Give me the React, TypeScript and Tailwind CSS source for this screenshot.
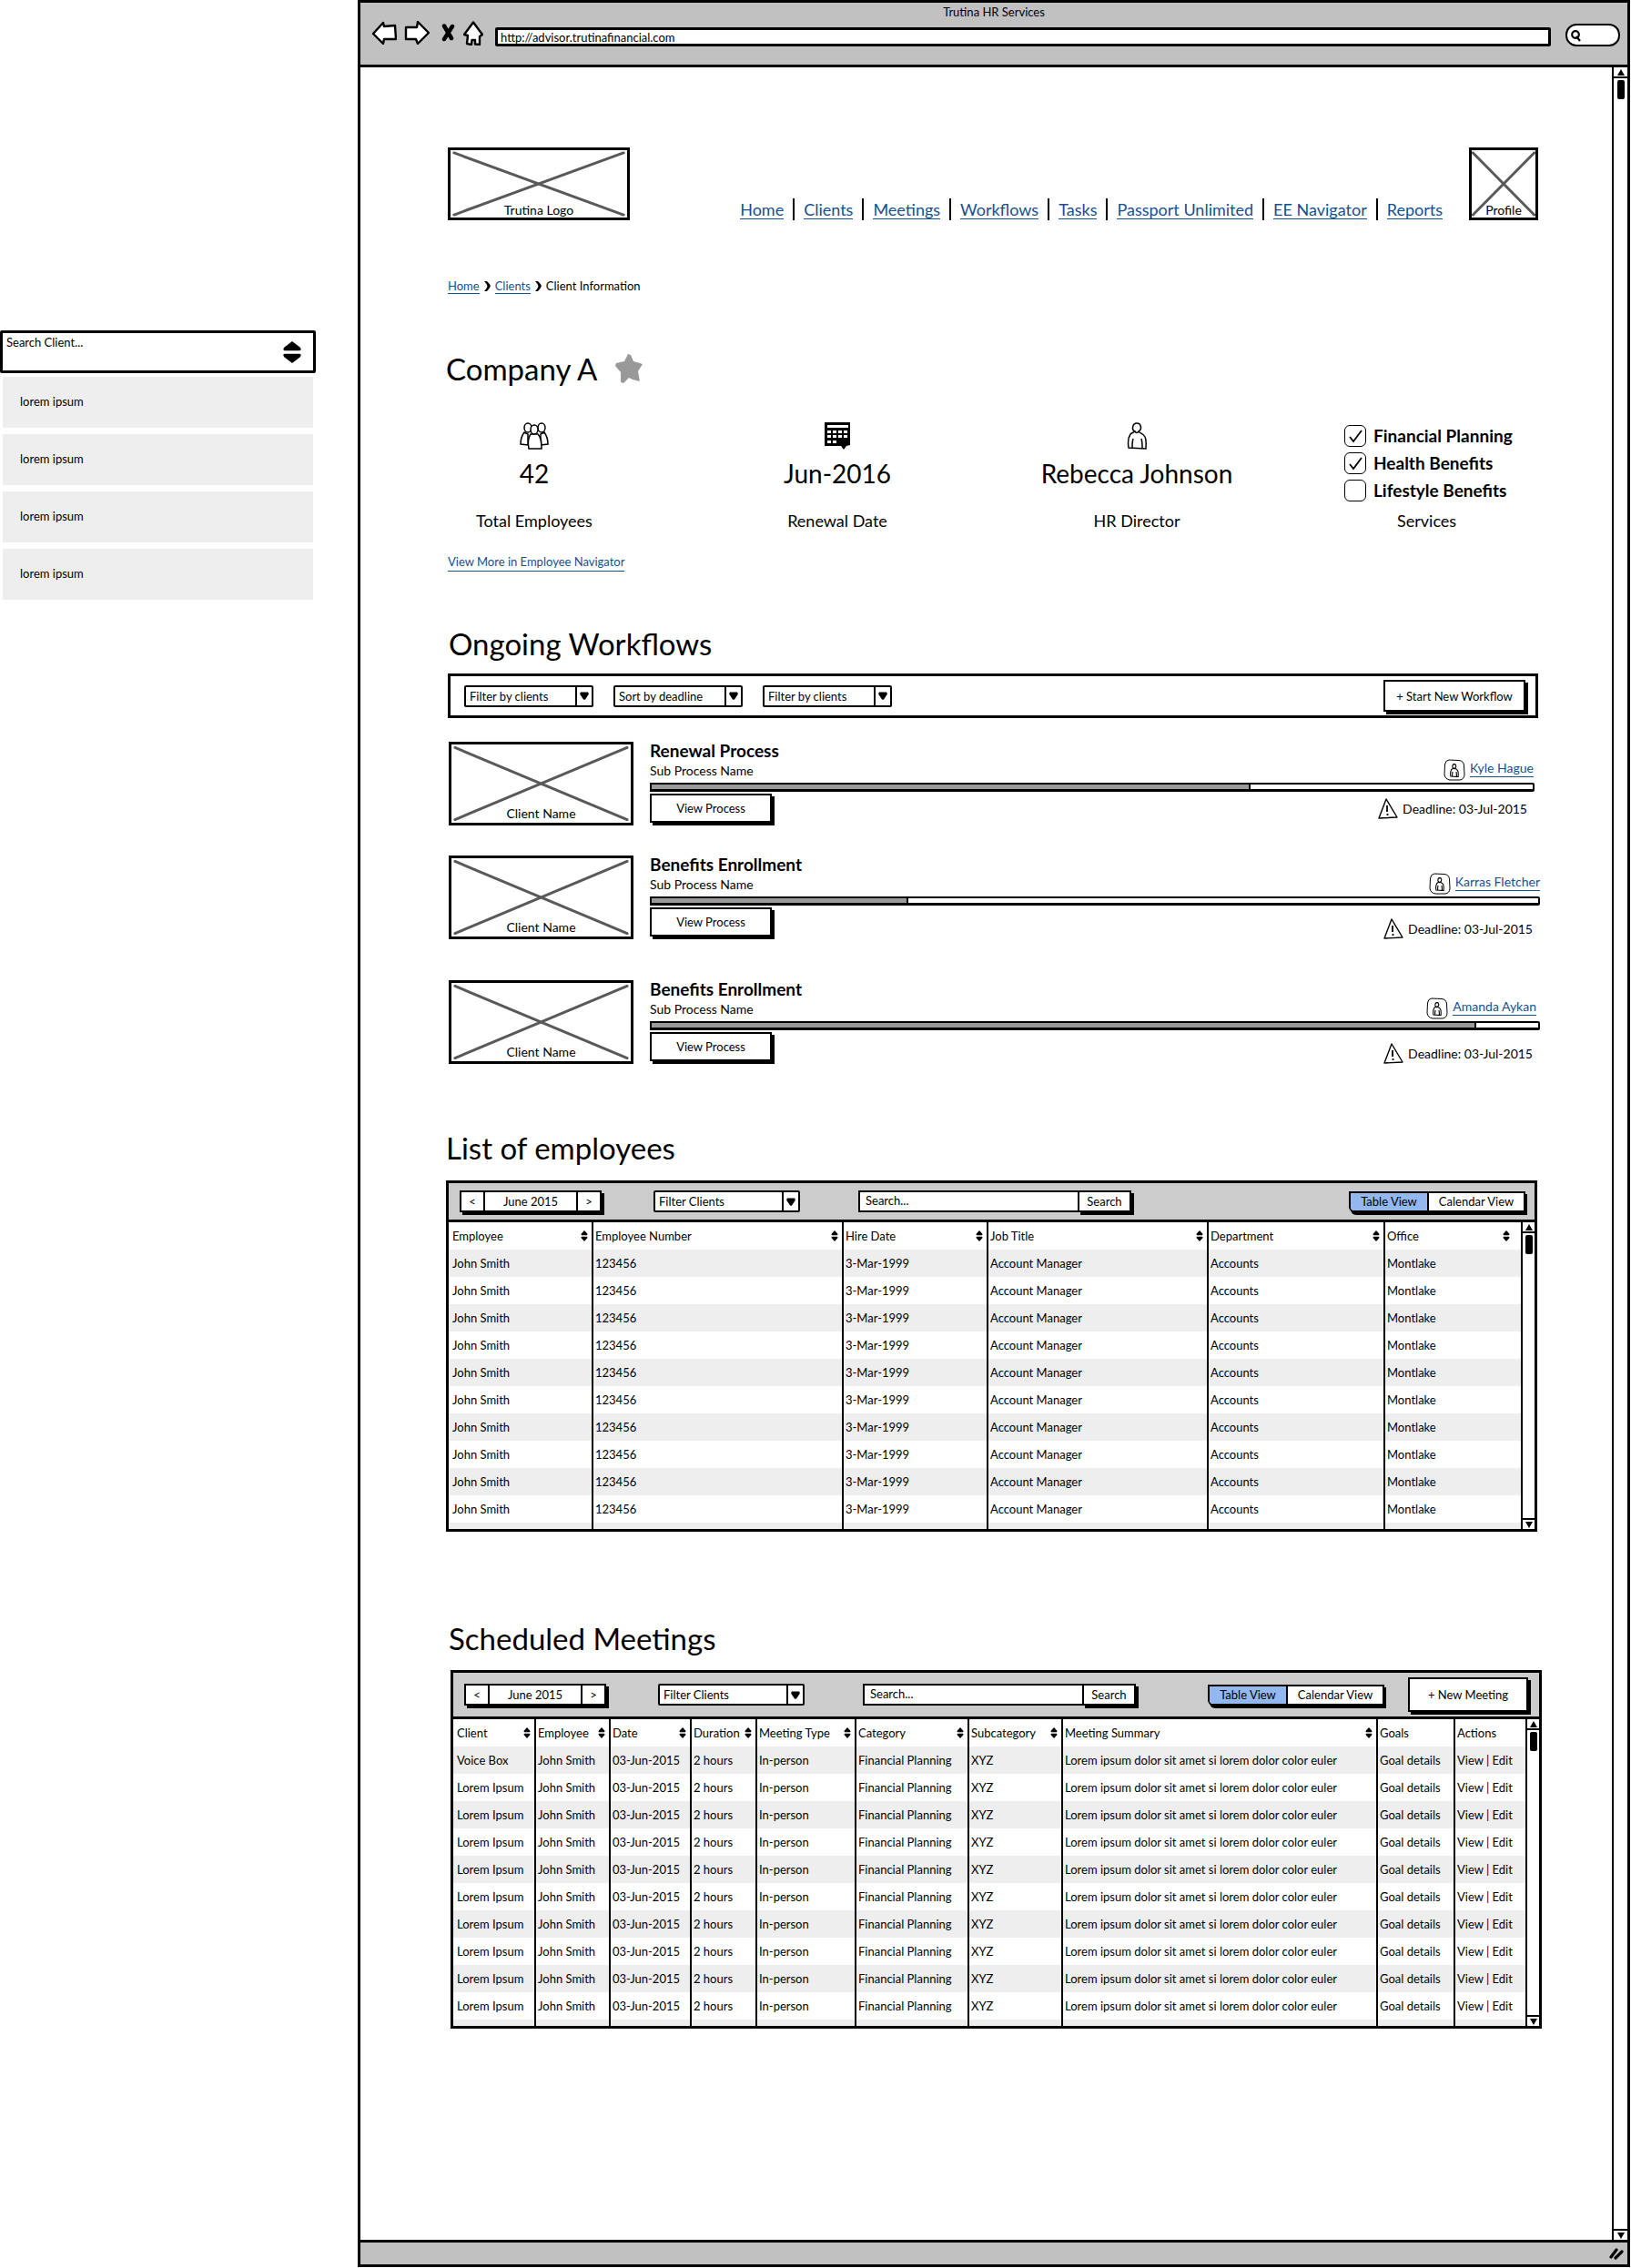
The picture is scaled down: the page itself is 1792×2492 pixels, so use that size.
import React from "react";

const linkClass = "text-[#16508f] border-b border-[#16508f]";

function SortIcon({ className = "h-3 w-2" }: { className?: string }) {
  return (
    <svg viewBox="0 0 10 14" preserveAspectRatio="none" className={className} aria-hidden="true">
      <path d="M5 0 L9 4 Q10 6 8.500 6 H1.500 Q0 6 1 4 Z M1.500 8 H8.500 Q10 8 9 10 L5 14 L1 10 Q0 8 1.500 8 Z" />
    </svg>
  );
}

function PersonShape({ weight = 1.5 }: { weight?: number }) {
  return (
    <path
      d="M9 10 C5 9 6 1 11 1 C16 1 17 8 13 10 C14 12 18 12 20 16 C22 20 21 24 21 29 L2 28 C1 22 2 16 4 13 C6 11 8 11 9 10 Z M7 18 C6 21 6 25 6 28 M16 18 C17 21 17 25 17 28 M9 10 C10 12 12 12 13 10"
      fill="none"
      stroke="black"
      strokeWidth={weight}
    />
  );
}

function PersonBadge() {
  return (
    <svg viewBox="0 0 24 24" className="size-6 shrink-0" aria-hidden="true">
      <path d="M6 1 L17 1.500 Q22 2 22.500 7 L23 17 Q23 22 18 23 L7 23 Q1.500 22 1 17 L1.500 6 Q2 1.500 6 1 Z" fill="none" stroke="black" />
      <svg x="7" y="5" width="10" height="15" viewBox="0 0 23 30" preserveAspectRatio="none">
        <PersonShape weight={2.5} />
      </svg>
    </svg>
  );
}

function PeopleIcon() {
  return (
    <svg viewBox="0 0 32 30" className="h-[30px] w-8" fill="white" stroke="black" strokeWidth="1.500" aria-hidden="true">
      <path d="M5 11 C2 15 1 19 1 24 L9 25 V13 Z M27 11 C30 15 31 19 31 24 L23 25 V13 Z" />
      <ellipse cx="9" cy="6" rx="4" ry="5" />
      <ellipse cx="24" cy="6" rx="4" ry="5" />
      <path d="M12 13 C9 17 9 23 10 29 L24 29 C24 23 24 17 20 13 Z" />
      <ellipse cx="16" cy="8" rx="4" ry="5" />
    </svg>
  );
}

function CalendarIcon() {
  const cells = [3, 9, 15, 21];
  return (
    <svg viewBox="0 0 28 30" className="h-[30px] w-7" aria-hidden="true">
      <path d="M0 0 H28 V25 L24 26 L21 30 L18 26 L0 26 Z" />
      <path d="M3 3 H26 V6 H3 Z" fill="white" />
      {[9, 14, 20].map((y, r) =>
        cells.map((x, c) => (r === 2 && c > 1 ? null : <rect key={x + "-" + y} x={x} y={y} width="4" height="3" fill="white" />)),
      )}
    </svg>
  );
}

function WarningIcon() {
  return (
    <svg viewBox="0 0 22 23" className="h-[23px] w-[22px] shrink-0" fill="none" stroke="black" aria-hidden="true">
      <path d="M9 1 L21 21 L1 22 Z" strokeWidth="1.400" strokeLinejoin="round" />
      <path d="M10 8 V15 M10.500 17 V19" strokeWidth="1.800" />
    </svg>
  );
}

function Placeholder({ label, className }: { label: string; className: string }) {
  return (
    <div className={"relative flex shrink-0 items-end justify-center border-[3px] border-black bg-white text-sm leading-4 " + className}>
      <svg viewBox="0 0 100 100" preserveAspectRatio="none" className="absolute inset-0 size-full" aria-hidden="true">
        <path d="M2 4 L98 96 M98 4 L2 96" stroke="#595959" strokeWidth="3" strokeLinecap="round" vectorEffect="non-scaling-stroke" />
      </svg>
      <span className="relative">{label}</span>
    </div>
  );
}

function Dropdown({ label, width }: { label: string; width: string }) {
  return (
    <div className={"relative h-6 shrink-0 rounded-xs border-2 border-black bg-white " + width}>
      <select aria-label={label} className="block h-full w-full appearance-none bg-transparent pl-1 text-[13px] leading-5">
        <option>{label}</option>
      </select>
      <span className="pointer-events-none absolute inset-y-0 right-0 flex w-[18px] items-center justify-center border-l-2 border-black">
        <svg viewBox="0 0 10 9" className="h-[9px] w-2.5" aria-hidden="true">
          <path d="M1 0.500 H9 Q10.500 2 9 4 L6 8.500 Q5 9 4 8.500 L1 4 Q-0.500 2 1 0.500 Z" />
        </svg>
      </span>
    </div>
  );
}

function ShadowButton({ children, className }: { children: React.ReactNode; className: string }) {
  return (
    <button type="button" className={"shrink-0 border-2 border-black bg-white text-[13px] leading-4 shadow-[3px_3px_0_#000] " + className}>
      {children}
    </button>
  );
}

function Scrollbar({ className = "w-[15px]" }: { className?: string }) {
  return (
    <div className={"flex shrink-0 flex-col items-center border-l-2 border-black bg-white " + className} aria-hidden="true">
      <span className="flex h-3 w-full shrink-0 items-center justify-center border-b-2 border-black">
        <svg viewBox="0 0 8 7" className="h-[7px] w-2">
          <path d="M4 0 L8 7 H0 Z" />
        </svg>
      </span>
      <span className="mt-0.5 h-[21px] w-2 shrink-0 rounded-xs bg-black" />
      <span className="mt-auto flex h-3 w-full shrink-0 items-center justify-center border-t-2 border-black">
        <svg viewBox="0 0 8 7" className="h-[7px] w-2">
          <path d="M0 0 H8 L4 7 Z" />
        </svg>
      </span>
    </div>
  );
}

function MonthPicker() {
  return (
    <div className="flex h-6 w-[156px] shrink-0 border-2 border-black bg-white text-[13px] leading-4 shadow-[3px_3px_0_#000]">
      <button type="button" className="w-[26px] border-r-2 border-black" aria-label="Previous month">
        &lt;
      </button>
      <button type="button" className="flex-1">
        June 2015
      </button>
      <button type="button" className="w-[26px] border-l-2 border-black" aria-label="Next month">
        &gt;
      </button>
    </div>
  );
}

function SearchBox() {
  return (
    <form className="flex h-6 w-[300px] shrink-0" role="search">
      <input
        type="search"
        aria-label="Search"
        placeholder="Search..."
        className="min-w-0 flex-1 border-2 border-r-0 border-black bg-white pl-1.5 text-[13px] placeholder:text-black"
      />
      <ShadowButton className="w-[59px]">Search</ShadowButton>
    </form>
  );
}

function ViewToggle() {
  return (
    <div className="flex h-[23px] w-[194px] shrink-0 rounded-bl-md border-2 border-black bg-white text-[13px] leading-4 shadow-[2px_3px_0_#000]">
      <button type="button" aria-pressed="true" className="w-[86px] rounded-bl-sm border-r-2 border-black bg-[#93b8f0]">
        Table View
      </button>
      <button type="button" aria-pressed="false" className="flex-1">
        Calendar View
      </button>
    </div>
  );
}

type Column = { name: string; width: string; sortable: boolean };

function DataTable({ columns, rows, label }: { columns: Column[]; rows: string[][]; label: string }) {
  return (
    <div className="flex">
      <table aria-label={label} className="min-w-0 flex-1 table-fixed border-collapse text-[13px] leading-4">
        <colgroup>
          {columns.map((c) => (
            <col key={c.name} className={c.width} />
          ))}
        </colgroup>
        <thead>
          <tr className="h-[30px]">
            {columns.map((c) => (
              <th
                key={c.name}
                scope="col"
                className="border-r-2 border-black pr-1 pl-0.5 text-left font-normal whitespace-nowrap first:pl-1 last:border-r-0 last:pr-3"
              >
                {c.sortable ? (
                  <button type="button" className="flex w-full items-center justify-between">
                    {c.name}
                    <SortIcon />
                  </button>
                ) : (
                  c.name
                )}
              </th>
            ))}
          </tr>
        </thead>
        <tbody>
          {rows.map((row, i) => (
            <tr key={i} className="h-[30px] odd:bg-[#eeeeee]">
              {row.map((cell, j) => (
                <td key={j} className="border-r-2 border-black pl-0.5 whitespace-nowrap first:pl-1 last:border-r-0">
                  {cell}
                </td>
              ))}
            </tr>
          ))}
          <tr className="h-[7px] bg-[#eeeeee]">
            {columns.map((c) => (
              <td key={c.name} className="border-r-2 border-black last:border-r-0" />
            ))}
          </tr>
        </tbody>
      </table>
      <Scrollbar />
    </div>
  );
}

const employeeColumns: Column[] = [
  { name: "Employee", width: "w-[158px]", sortable: true },
  { name: "Employee Number", width: "w-[275px]", sortable: true },
  { name: "Hire Date", width: "w-[159px]", sortable: true },
  { name: "Job Title", width: "w-auto", sortable: true },
  { name: "Department", width: "w-[194px]", sortable: true },
  { name: "Office", width: "w-[150px]", sortable: true },
];

const employeeRows = Array.from({ length: 10 }, () => ["John Smith", "123456", "3-Mar-1999", "Account Manager", "Accounts", "Montlake"]);

const meetingColumns: Column[] = [
  { name: "Client", width: "w-[90px]", sortable: true },
  { name: "Employee", width: "w-[82px]", sortable: true },
  { name: "Date", width: "w-[89px]", sortable: true },
  { name: "Duration", width: "w-[72px]", sortable: true },
  { name: "Meeting Type", width: "w-[109px]", sortable: true },
  { name: "Category", width: "w-[124px]", sortable: true },
  { name: "Subcategory", width: "w-[103px]", sortable: true },
  { name: "Meeting Summary", width: "w-auto", sortable: true },
  { name: "Goals", width: "w-[85px]", sortable: false },
  { name: "Actions", width: "w-[78px]", sortable: false },
];

const meetingRows = Array.from({ length: 10 }, (_, i) => [
  i === 0 ? "Voice Box" : "Lorem Ipsum",
  "John Smith",
  "03-Jun-2015",
  "2 hours",
  "In-person",
  "Financial Planning",
  "XYZ",
  "Lorem ipsum dolor sit amet si lorem dolor color euler",
  "Goal details",
  "View | Edit",
]);

type Workflow = { title: string; owner: string; progress: number; spacing: string; ownerPad: string; deadlinePad: string };

const workflows: Workflow[] = [
  { title: "Renewal Process", owner: "Kyle Hague", progress: 68, spacing: "mt-[26px] mr-2", ownerPad: "pr-px", deadlinePad: "pt-[5px]" },
  { title: "Benefits Enrollment", owner: "Karras Fletcher", progress: 29, spacing: "mt-[33px] mr-0.5", ownerPad: "pr-0", deadlinePad: "pt-3" },
  { title: "Benefits Enrollment", owner: "Amanda Aykan", progress: 93, spacing: "mt-[45px] mr-0.5", ownerPad: "pr-1", deadlinePad: "pt-3" },
];

function WorkflowRow({ title, owner, progress, spacing, ownerPad, deadlinePad }: Workflow) {
  return (
    <article className={"ml-[3px] flex h-[92px] gap-[18px] " + spacing}>
      <Placeholder label="Client Name" className="w-[203px] pb-0.5" />
      <div className="min-w-0 flex-1">
        <div className="flex h-[45px] justify-between">
          <div>
            <h3 className="text-[19px] leading-5 font-bold">{title}</h3>
            <p className="text-sm leading-6">Sub Process Name</p>
          </div>
          <div className={"flex items-end gap-[5px] pb-0.5 " + ownerPad}>
            <PersonBadge />
            <a href="#" className={"mb-1 text-sm leading-[18px] " + linkClass}>
              {owner}
            </a>
          </div>
        </div>
        <div role="progressbar" aria-label={title} aria-valuenow={progress} className="h-[10px] rounded-r-xs border-2 border-b-3 border-black bg-white">
          <div className="h-full border-r-2 border-black bg-[#999999]" style={{ width: progress + "%" }} />
        </div>
        <div className="flex items-start justify-between pt-0.5 pr-2">
          <ShadowButton className="h-8 w-[134px]">View Process</ShadowButton>
          <div className={"flex items-center gap-[5px] text-sm leading-4 " + deadlinePad}>
            <WarningIcon />
            Deadline: 03-Jul-2015
          </div>
        </div>
      </div>
    </article>
  );
}

function Stat({ icon, value, label, className = "" }: { icon: React.ReactNode; value: string; label: string; className?: string }) {
  return (
    <div className={"flex flex-col items-center " + className}>
      {icon}
      <div className="mt-1.5 text-[28px] leading-10">{value}</div>
      <div className="mt-5 text-lg leading-6">{label}</div>
    </div>
  );
}

function ServiceCheck({ id, label, checked = false }: { id: string; label: string; checked?: boolean }) {
  return (
    <div className="flex h-[30px] items-center gap-2">
      <span className="relative size-6">
        <input id={id} type="checkbox" defaultChecked={checked} className="peer block size-6 appearance-none rounded-md border border-black" />
        <svg viewBox="0 0 24 24" className="pointer-events-none absolute inset-0 hidden size-6 peer-checked:block" aria-hidden="true">
          <path d="M6 13 L10 18 L19 6" fill="none" stroke="black" strokeWidth="1.800" />
        </svg>
      </span>
      <label htmlFor={id} className="text-[19px] leading-6 font-bold whitespace-nowrap">
        {label}
      </label>
    </div>
  );
}

const navItems = ["Home", "Clients", "Meetings", "Workflows", "Tasks", "Passport Unlimited", "EE Navigator", "Reports"];

function Chevron() {
  return (
    <svg viewBox="0 0 7 11" className="h-[11px] w-[7px]" aria-hidden="true">
      <path d="M0 0 L3 0 Q6 3 7 5 Q6 8 3 11 L0 11 Q3 8 3.500 5.500 Q3 3 0 0 Z" />
    </svg>
  );
}

function BrowserBar() {
  return (
    <header className="h-[71px] border-b-3 border-black bg-[#c1c1c1]">
      <div className="pt-0.5 text-center text-[13px] leading-4">Trutina HR Services</div>
      <div className="flex h-[30px] items-center pr-2 pl-3">
        <button type="button" aria-label="Back">
          <svg viewBox="0 0 28 26" className="h-[26px] w-7" fill="white" stroke="black" strokeWidth="2.400" strokeLinejoin="round">
            <path d="M2 14 L13 2 L14 6 L26 5 L27 20 L14 20 L13 25 Z" />
          </svg>
        </button>
        <button type="button" aria-label="Forward" className="ml-2">
          <svg viewBox="0 0 28 26" className="h-[26px] w-7" fill="white" stroke="black" strokeWidth="2.400" strokeLinejoin="round">
            <path d="M2 7 L14 7 L15 1 L27 13 L15 25 L13 20 L2 20 Z" />
          </svg>
        </button>
        <button type="button" aria-label="Stop" className="ml-3">
          <svg viewBox="0 0 16 20" className="h-5 w-4" fill="none" stroke="black" strokeWidth="4.500" strokeLinecap="round">
            <path d="M4 2.500 L12 16 M13 3 L4 17" />
          </svg>
        </button>
        <button type="button" aria-label="Home page" className="ml-[9px]">
          <svg viewBox="0 0 22 27" className="h-[27px] w-[22px]" fill="white" stroke="black" strokeWidth="2.400" strokeLinejoin="round">
            <path d="M11 1.500 L21 15 L18 17 L18 26 L13 25.500 L13 21 L9.500 21 L9 26 L4 25 L5 16 L1 15 Z" />
          </svg>
        </button>
        <input
          type="text"
          aria-label="Address"
          defaultValue="http://advisor.trutinafinancial.com"
          className="ml-[13px] h-[21px] min-w-0 flex-1 self-end rounded-xs border-[3px] border-black bg-white pl-[3px] text-[13px]"
        />
        <label className="ml-4 flex h-[25px] w-[60px] items-center self-end rounded-[12px] border-2 border-black bg-white pl-1">
          <svg viewBox="0 0 12 14" className="h-3.5 w-3 shrink-0" fill="none" stroke="black" strokeWidth="2.200" aria-hidden="true">
            <circle cx="5" cy="6" r="3.800" />
            <path d="M6 8 L10 13" />
          </svg>
          <input type="search" aria-label="Web search" className="w-full min-w-0 bg-transparent text-[13px]" />
        </label>
      </div>
    </header>
  );
}

function ClientSearch() {
  return (
    <aside className="w-[347px] shrink-0 pt-[363px]">
      <div className="flex h-[47px] justify-between rounded-xs border-[3px] border-black bg-white">
        <input
          type="text"
          aria-label="Search Client"
          placeholder="Search Client..."
          className="h-5 min-w-0 flex-1 pl-1 text-[13px] placeholder:text-black"
        />
        <button type="button" aria-label="Toggle client list" className="mr-3">
          <SortIcon className="h-6 w-[22px]" />
        </button>
      </div>
      <ul className="mt-1 mr-[3px] ml-[3px] flex flex-col gap-[7px] text-[13px]">
        {[1, 2, 3, 4].map((n) => (
          <li key={n} className="flex h-14 items-center bg-[#eeeeee] pl-[19px]">
            lorem ipsum
          </li>
        ))}
      </ul>
    </aside>
  );
}

export default function App() {
  return (
    <div className="flex min-h-screen gap-[46px] bg-white pr-px pb-px font-['Lato','Liberation_Sans',sans-serif] text-black">
      <ClientSearch />
      <div className="flex min-w-0 flex-1 flex-col border-[3px] border-black">
        <BrowserBar />
        <div className="flex flex-1">
          <main className="min-w-0 flex-1 pt-[88px] pr-[77px] pl-[94px]">
            <div className="flex items-end pr-1 pl-0.5">
              <Placeholder label="Trutina Logo" className="h-20 w-[200px]" />
              <nav className="ml-auto flex h-6 items-center gap-2.5 text-lg">
                {navItems.map((item, i) => (
                  <React.Fragment key={item}>
                    {i > 0 && <span className="h-6 w-0.5 bg-black" />}
                    <a href="#" className={"leading-5 " + linkClass}>
                      {item}
                    </a>
                  </React.Fragment>
                ))}
              </nav>
              <Placeholder label="Profile" className="ml-[29px] h-20 w-[76px]" />
            </div>

            <nav aria-label="Breadcrumb" className="mt-[62px] ml-0.5 flex h-5 items-center gap-[5px] text-[13px] leading-4">
              <a href="#" className={linkClass}>
                Home
              </a>
              <Chevron />
              <a href="#" className={linkClass}>
                Clients
              </a>
              <Chevron />
              <span>Client Information</span>
            </nav>

            <div className="mt-[61px] flex items-center gap-5">
              <h1 className="text-[33px] leading-10">Company A</h1>
              <svg viewBox="0 0 30 32" className="h-8 w-[30px]" aria-hidden="true">
                <path d="M14 0 L17 1 L20 8 L30 11 L25 19 L27 30 L19 28 L15 26 L9 32 L6 31 L6 20 L0 13 L1 10 L10 8 Z" fill="#999999" />
              </svg>
            </div>

            <section aria-label="Company summary" className="mt-[39px] ml-0.5 grid grid-cols-[260fr_336fr_322fr_284fr]">
              <Stat icon={<PeopleIcon />} value="42" label="Total Employees" className="pr-[70px]" />
              <Stat icon={<CalendarIcon />} value="Jun-2016" label="Renewal Date" />
              <Stat
                icon={
                  <svg viewBox="0 0 23 30" className="h-[30px] w-[23px]" aria-hidden="true">
                    <PersonShape />
                  </svg>
                }
                value="Rebecca Johnson"
                label="HR Director"
              />
              <div className="flex flex-col pl-[67px]">
                <ServiceCheck id="financial" label="Financial Planning" checked />
                <ServiceCheck id="health" label="Health Benefits" checked />
                <ServiceCheck id="lifestyle" label="Lifestyle Benefits" />
                <div className="mt-1.5 ml-[58px] text-lg leading-6">Services</div>
              </div>
            </section>
            <div className="mt-[23px] ml-0.5 flex text-[13px] leading-5">
              <a href="#" className={linkClass}>
                View More in Employee Navigator
              </a>
            </div>

            <section>
              <h2 className="mt-[59px] ml-[3px] text-[33px] leading-10">Ongoing Workflows</h2>
              <div className="mt-[13px] mr-1 ml-0.5 flex h-[49px] items-center border-[3px] border-black pr-[11px] pl-[15px]">
                <div className="flex gap-[22px]">
                  <Dropdown label="Filter by clients" width="w-[142px]" />
                  <Dropdown label="Sort by deadline" width="w-[142px]" />
                  <Dropdown label="Filter by clients" width="w-[142px]" />
                </div>
                <ShadowButton className="ml-auto h-[35px] w-[156px]">+ Start New Workflow</ShadowButton>
              </div>
              {workflows.map((w) => (
                <WorkflowRow key={w.owner} {...w} />
              ))}
            </section>

            <section>
              <h2 className="mt-[72px] text-[33px] leading-10">List of employees</h2>
              <div className="mt-4 mr-[5px] border-[3px] border-black">
                <div className="flex h-[43px] items-center border-b-3 border-black bg-[#cccccc] pr-[10px] pl-3">
                  <MonthPicker />
                  <div className="ml-[57px]">
                    <Dropdown label="Filter Clients" width="w-[161px]" />
                  </div>
                  <div className="ml-16">
                    <SearchBox />
                  </div>
                  <div className="ml-auto">
                    <ViewToggle />
                  </div>
                </div>
                <DataTable columns={employeeColumns} rows={employeeRows} label="List of employees" />
              </div>
            </section>

            <section>
              <h2 className="mt-[97px] ml-[3px] text-[33px] leading-10">Scheduled Meetings</h2>
              <div className="mt-[15px] ml-[5px] border-[3px] border-black">
                <div className="flex h-[51px] items-center border-b-3 border-black bg-[#cccccc] pr-[12px] pl-3">
                  <MonthPicker />
                  <div className="ml-[57px]">
                    <Dropdown label="Filter Clients" width="w-[161px]" />
                  </div>
                  <div className="ml-16">
                    <SearchBox />
                  </div>
                  <div className="ml-auto flex items-center gap-[26px]">
                    <ViewToggle />
                    <ShadowButton className="h-[38px] w-[132px]">+ New Meeting</ShadowButton>
                  </div>
                </div>
                <DataTable columns={meetingColumns} rows={meetingRows} label="Scheduled meetings" />
              </div>
            </section>
          </main>
          <Scrollbar className="w-[17px]" />
        </div>
        <footer className="flex h-[27px] items-center justify-end border-t-3 border-black bg-[#c1c1c1] pr-1">
          <svg viewBox="0 0 16 13" className="h-[13px] w-4" fill="none" stroke="black" strokeWidth="3.200" strokeLinecap="round" aria-hidden="true">
            <path d="M2 10 L8 2 M7 11 L14 4" />
          </svg>
        </footer>
      </div>
    </div>
  );
}
